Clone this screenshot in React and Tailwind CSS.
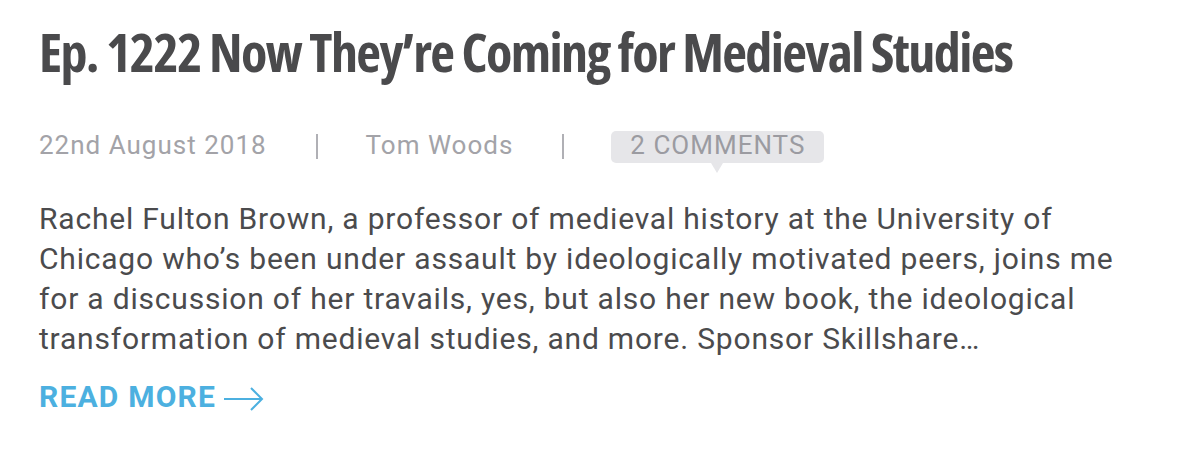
import React from "react";

export default function App() {
  return (
    <div className="w-[1204px] h-[450px] bg-white overflow-hidden">
      <div className="pl-[39px] pt-[19px]">
        <h1 className="font-['Open_Sans',sans-serif] font-stretch-condensed text-[54px] leading-[64px] font-bold text-[#4a4a4c] tracking-[-1.6px] whitespace-nowrap">
          Ep. 1222 Now They’re Coming for Medieval Studies
        </h1>
        <div className="mt-[48px] flex items-start font-['Roboto',sans-serif] text-[26px] leading-[28px] tracking-[1px] text-[#a3a3a8]">
          <span>22nd August 2018</span>
          <span className="ml-[49px] mt-[3px] w-[2px] h-[25px] bg-[#b0b0b5]" />
          <span className="ml-[48px]">Tom Woods</span>
          <span className="ml-[49px] mt-[3px] w-[2px] h-[25px] bg-[#b0b0b5]" />
          <span className="relative ml-[47px] h-[32px] rounded-[5px] bg-[#e6e6e9] px-[19px] text-[#9b9ba1]">
            2 COMMENTS
            <span className="absolute left-[100px] top-[32px] h-0 w-0 border-x-[6px] border-t-[10px] border-x-transparent border-t-[#e6e6e9]" />
          </span>
        </div>
        <p className="mt-[36px] font-['Roboto',sans-serif] text-[30px] leading-[40px] tracking-[0.8px] text-[#4b4b4d] whitespace-nowrap">
          Rachel Fulton Brown, a professor of medieval history at the University of
          <br />
          Chicago who’s been under assault by ideologically motivated peers, joins me
          <br />
          for a discussion of her travails, yes, but also her new book, the ideological
          <br />
          transformation of medieval studies, and more. Sponsor Skillshare…
        </p>
        <a className="mt-[20px] flex items-center font-['Roboto',sans-serif] text-[30px] leading-[36px] font-bold tracking-[1.2px] text-[#4cb0e0]">
          READ MORE
          <svg className="ml-[8px] translate-y-[2px]" width="40" height="26" viewBox="0 0 40 26" fill="none" stroke="#4cb0e0" strokeWidth="2">
            <path d="M0 13h37M27 2l11 11-11 11" />
          </svg>
        </a>
      </div>
    </div>
  );
}
